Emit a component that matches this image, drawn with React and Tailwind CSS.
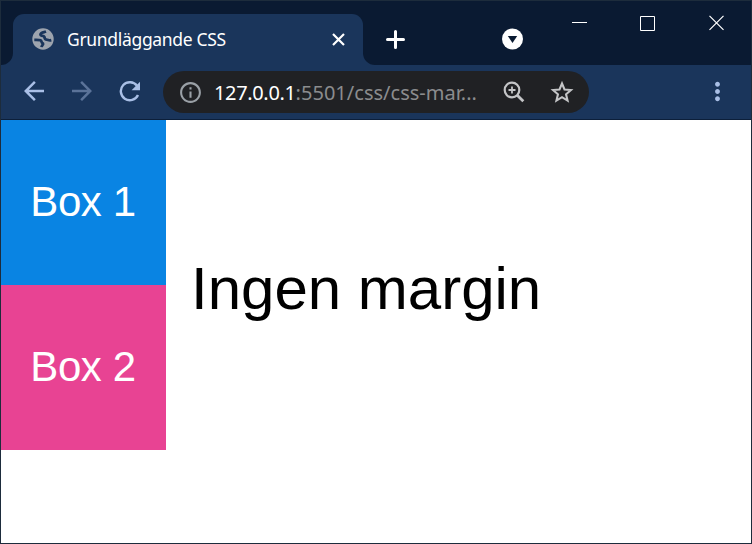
import { MdArrowBack, MdArrowForward, MdInfoOutline, MdMoreVert } from "react-icons/md";

function Globe() {
  return (
    <svg width="22" height="22" viewBox="0 0 22 22" className="shrink-0">
      <circle cx="11" cy="11" r="10.7" fill="#9da4ae" />
      <g fill="none" stroke="#1a355b" strokeWidth="2.800" strokeLinejoin="round">
        <path d="M14 3.500C12 4.300 9 4.200 8.500 6.300c-.3 1.900 3 1.100 3.700 2.300.6 1.400.3 3 2.300 3 1.800 0 2 1.300 4.800.6" />
        <path d="M2.300 11.800c2.200 0 4.700-.2 6.200.5 1.600.8.500 2.300 2 2.800 1.700.6-.8 2.300-.9 4" />
      </g>
    </svg>
  );
}

function Refresh() {
  return (
    <svg width="22" height="22" viewBox="0 0 22 22" fill="none" className="shrink-0">
      <path d="M18 4.800A9 9 0 1 0 19 14" stroke="currentColor" strokeWidth="2.400" />
      <path d="M21 .8v8.400h-8.400z" fill="currentColor" />
    </svg>
  );
}

function ZoomIn() {
  return (
    <svg width="22" height="22" viewBox="0 0 22 22" fill="none" stroke="currentColor" className="shrink-0">
      <circle cx="9" cy="9" r="7.300" strokeWidth="2.200" />
      <path d="M14 14l6.300 6.300" strokeWidth="2.800" />
      <path d="M9 5.500v7M5.500 9h7" strokeWidth="1.800" />
    </svg>
  );
}

function Star() {
  return (
    <svg width="24" height="24" viewBox="0 0 22 22" fill="none" stroke="currentColor" className="shrink-0">
      <path d="M11 3.200l2.300 5.500 5.900.5-4.500 3.900 1.400 5.800-5.100-3.100-5.100 3.100 1.400-5.800L2.800 9.200l5.900-.5z" strokeWidth="1.900" />
    </svg>
  );
}

function Tab() {
  return (
    <div className="flex h-[51px] w-[350px] items-center rounded-t-[11px] bg-[#1a355b] pb-px pl-[19px] pr-[18px]">
      <Globe />
      <span className="ml-[13px] flex-1 whitespace-nowrap pb-px text-[17.5px] leading-6 tracking-[-0.32px] text-white">
        Grundläggande CSS
      </span>
      <svg width="13" height="13" viewBox="0 0 13 13">
        <path d="M1 1L12 12M12 1L1 12" stroke="#fff" strokeWidth="2.2" />
      </svg>
    </div>
  );
}

function TitleBar() {
  return (
    <div className="flex h-16 items-end bg-[#0a1a32]">
      <div className="h-3 w-3 bg-[#1a355b]">
        <div className="h-3 w-3 rounded-br-[12px] bg-[#0a1a32]" />
      </div>
      <Tab />
      <div className="h-3 w-3 bg-[#1a355b]">
        <div className="h-3 w-3 rounded-bl-[12px] bg-[#0a1a32]" />
      </div>
      <div className="flex h-[51px] flex-1 items-center pb-px pl-[11px]">
        <svg width="19" height="19" viewBox="0 0 19 19">
          <path d="M9.500 1.500v16M1.500 9.500h16" stroke="#fff" strokeWidth="3" strokeLinecap="round" />
        </svg>
        <svg width="22" height="22" viewBox="0 0 22 22" className="ml-[97px]">
          <circle cx="10.500" cy="11" r="10.500" fill="#fff" />
          <path d="M5.800 8h9.400L10.500 15z" fill="#0a1a32" />
        </svg>
      </div>
      <div className="flex w-[179px] items-start self-start pt-[14px]">
        <svg width="153" height="16" viewBox="0 0 153 16" fill="none" stroke="#fff">
          <path d="M0 7.500h15" />
          <path d="M68.500 1.500h14v14h-14z" />
          <path d="M137.500 .8l14 14M151.500 .8l-14 14" strokeWidth="1.200" />
        </svg>
      </div>
    </div>
  );
}

function Toolbar() {
  return (
    <div className="flex h-[55px] items-center border-b border-[#0c1f3a] bg-[#1a355b] pl-[18px] text-[#a9bfe6]">
      <MdArrowBack size={30} className="mb-[2px]" />
      <MdArrowForward size={30} className="mb-[2px] ml-[18px] text-[#5b7399]" />
      <div className="mb-px ml-[22px] mr-[22px]">
        <Refresh />
      </div>
      <div className="flex h-[42px] w-[426px] items-center rounded-full bg-[#202124] pl-[15px] text-[#c4c5c7]">
        <MdInfoOutline size={25} className="text-[#9aa0a6]" />
        <span className="ml-[11px] w-[289px] whitespace-nowrap pt-px text-[20px] leading-7 tracking-[0.02px] text-[#8b8c8e]">
          <span className="tracking-[-0.35px] text-white">127.0.0.1</span>:5501/css/css-mar...
        </span>
        <ZoomIn />
        <div className="ml-[25px]">
          <Star />
        </div>
      </div>
      <MdMoreVert size={29} className="mb-px ml-[114px]" />
    </div>
  );
}

export default function App() {
  return (
    <div className="flex h-[544px] w-[752px] flex-col overflow-hidden border border-[#1d2c3c] bg-white font-['Noto_Sans',sans-serif]">
      <TitleBar />
      <Toolbar />
      <main className="flex flex-1 font-['Liberation_Sans',Arial,sans-serif]">
        <div className="w-[165px] text-[42px] tracking-[-0.4px] text-white">
          <div className="flex h-[165px] items-center justify-center bg-[#0984e3] pb-[3px] pr-px">Box 1</div>
          <div className="flex h-[165px] items-center justify-center bg-[#e84393] pb-[3px] pr-px">Box 2</div>
        </div>
        <h1 className="ml-[25px] mt-[139px] text-[60px] leading-[60px] text-black">Ingen margin</h1>
      </main>
    </div>
  );
}
